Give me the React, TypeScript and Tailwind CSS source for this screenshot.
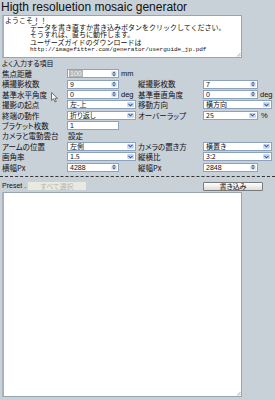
import type { ReactNode } from 'react';

const jp = "font-['Noto_Sans_CJK_JP',sans-serif] [font-feature-settings:'palt']";
const msg = "font-['Liberation_Sans','Noto_Sans_CJK_JP',sans-serif]";

function Spin() {
  return (
    <span className="absolute right-[1px] top-[1px] bottom-[1px] w-[6px] bg-[#dfe7f3] rounded-[1px] flex items-center justify-center">
      <svg width="4" height="6" viewBox="0 0 4 6">
        <path d="M0 2.5 L2 0.5 L4 2.5 Z M0 3.5 L2 5.5 L4 3.5 Z" fill="#4d6185" />
      </svg>
    </span>
  );
}

function NumInput({
  value,
  w,
  unit,
  spin = true,
  selected = false,
}: {
  value: string;
  w: string;
  unit?: string;
  spin?: boolean;
  selected?: boolean;
}) {
  return (
    <div className="flex items-center h-full">
      <div className={`relative h-[9px] ${w} bg-white border border-[#8da2bd] flex items-center pl-[1px]`}>
        {selected ? (
          <span className="bg-[#b4b4b4] text-[#f4f4f4] text-[7px] leading-[7px] px-[1px] font-['Liberation_Sans']">{value}</span>
        ) : (
          <span className="text-[7px] leading-[7px] font-['Liberation_Sans'] pl-[1px]">{value}</span>
        )}
        {spin && <Spin />}
      </div>
      {unit && <span className="ml-[2px] text-[7.5px] font-['Liberation_Sans']">{unit}</span>}
    </div>
  );
}

function Select({ value, w, unit }: { value: string; w: string; unit?: string }) {
  return (
    <div className="flex items-center h-full">
      <div className={`relative h-[9px] ${w} bg-white border border-[#8da2bd] flex items-center pl-[2px]`}>
        <span className={`text-[7px] leading-[7px] ${jp}`}>{value}</span>
        <span className="absolute right-[1px] top-[1px] bottom-[1px] w-[7px] bg-[#c9d8f4] rounded-[1px] flex items-center justify-center">
          <svg width="5" height="4" viewBox="0 0 5 4">
            <path d="M0.5 0.8 L2.5 2.8 L4.5 0.8" stroke="#3a5a9c" strokeWidth="1.1" fill="none" />
          </svg>
        </span>
      </div>
      {unit && <span className="ml-[3px] text-[7.5px] font-['Liberation_Sans']">{unit}</span>}
    </div>
  );
}

function Row({
  l,
  lf,
  r,
  rf,
}: {
  l: string;
  lf: ReactNode;
  r?: string;
  rf?: ReactNode;
}) {
  return (
    <div className="grid grid-cols-[65px_70px_66px_72px] h-[10.4px] pl-[2px]">
      <div className={`flex items-center text-[7.5px] ${jp}`}>{l}</div>
      <div>{lf}</div>
      <div className={`flex items-center pl-[1px] text-[7.5px] ${jp}`}>{r}</div>
      <div>{rf}</div>
    </div>
  );
}

export default function App() {
  return (
    <div className="relative w-[275px] h-[400px] overflow-hidden bg-[#c8d0d8] text-[#111]">
      <h1 className="h-[15px] pl-[1px] text-[12px] leading-[14px] font-['Liberation_Sans',sans-serif]">
        Higth resoluetion mosaic generator
      </h1>

      {/* message box */}
      <div className="relative ml-[2px] w-[240px] h-[43px] bg-white border border-[#9aa4ae] border-l-2 border-l-[#a9b2bc] pt-[1px]">
        <div className={`pl-[1px] text-[7px] leading-[7.2px] ${msg}`}>ようこそ！！</div>
        <div className={`pl-[26px] text-[7px] leading-[7.2px] ${msg}`}>データを書き直すか書き込みボタンをクリックしてください。</div>
        <div className={`pl-[26px] text-[7px] leading-[7.2px] ${msg}`}>そうすれば、直ちに動作します。</div>
        <div className={`pl-[26px] text-[7px] leading-[7.2px] ${msg}`}>ユーザーズガイドのダウンロードは</div>
        <div className="pl-[26px] text-[6px] leading-[7.2px] font-['Liberation_Mono',monospace]">
          http://imagefitter.com/generator/userguide_jp.pdf
        </div>
        <Grip />
      </div>

      <div className={`h-[10px] pl-[2px] pt-[1px] text-[7px] leading-[9px] ${jp}`}>よく入力する項目</div>

      <Row l="焦点距離" lf={<NumInput value="100" w="w-[52px]" unit="mm" selected />} />
      <Row
        l="横撮影枚数"
        lf={<NumInput value="9" w="w-[52px]" />}
        r="縦撮影枚数"
        rf={<NumInput value="7" w="w-[55px]" />}
      />
      <Row
        l="基準水平角度"
        lf={<NumInput value="0" w="w-[52px]" unit="deg" />}
        r="基準垂直角度"
        rf={<NumInput value="0" w="w-[55px]" unit="deg" />}
      />
      <Row
        l="撮影の起点"
        lf={<Select value="左-上" w="w-[69px]" />}
        r="移動方向"
        rf={<Select value="横方向" w="w-[69px]" />}
      />
      <Row
        l="終端の動作"
        lf={<Select value="折り返し" w="w-[69px]" />}
        r="オーバーラップ"
        rf={<Select value="25" w="w-[55px]" unit="%" />}
      />
      <Row l="ブラケット枚数" lf={<NumInput value="1" w="w-[52px]" spin={false} />} />
      <Row
        l="カメラと電動雲台"
        lf={<div className={`flex items-center h-full pl-[1px] text-[7.5px] ${jp}`}>設定</div>}
      />
      <Row
        l="アームの位置"
        lf={<Select value="左側" w="w-[69px]" />}
        r="カメラの置き方"
        rf={<Select value="横置き" w="w-[69px]" />}
      />
      <Row
        l="画角率"
        lf={<Select value="1.5" w="w-[69px]" />}
        r="縦横比"
        rf={<Select value="3:2" w="w-[69px]" />}
      />
      <Row
        l="横幅Px"
        lf={<NumInput value="4288" w="w-[52px]" />}
        r="縦幅Px"
        rf={<NumInput value="2848" w="w-[55px]" />}
      />

      <div className="mt-[4px] border-t border-dashed border-[#333]" />

      <div className="mt-[5px] h-[9px] flex items-center pl-[2px]">
        <span className="w-[26px] text-[7px] font-['Liberation_Sans']">Preset .</span>
        <button className={`w-[58px] h-[8px] bg-[#e9e9e2] text-[#b8b8b0] text-[7px] leading-[7px] ${jp}`}>
          すべて選択
        </button>
        <button
          className={`ml-[117px] w-[60px] h-[9px] border border-[#7a7a7a] rounded-[1px] bg-gradient-to-b from-white to-[#dcdcdc] text-[7px] leading-[7px] ${jp}`}
        >
          書き込み
        </button>
      </div>

      <div className="relative mt-[1px] ml-[2px] w-[240px] h-[205px] bg-white border border-[#9aa4ae] border-l-2 border-l-[#a9b2bc]">
        <Grip />
      </div>

      {/* mouse pointer */}
      <svg className="absolute left-[51px] top-[92px]" width="8" height="11" viewBox="0 0 8 11">
        <path d="M0.5 0.5 L0.5 8.5 L2.5 6.8 L4 10 L5.3 9.4 L3.9 6.3 L6.6 6.3 Z" fill="#f4f4f4" stroke="#555" strokeWidth="0.8" />
      </svg>
    </div>
  );
}

function Grip() {
  return (
    <svg className="absolute right-0 bottom-0" width="5" height="5" viewBox="0 0 5 5">
      <path d="M4.5 1 L1 4.5 M4.5 3 L3 4.5" stroke="#9a9a9a" strokeWidth="0.8" />
    </svg>
  );
}
